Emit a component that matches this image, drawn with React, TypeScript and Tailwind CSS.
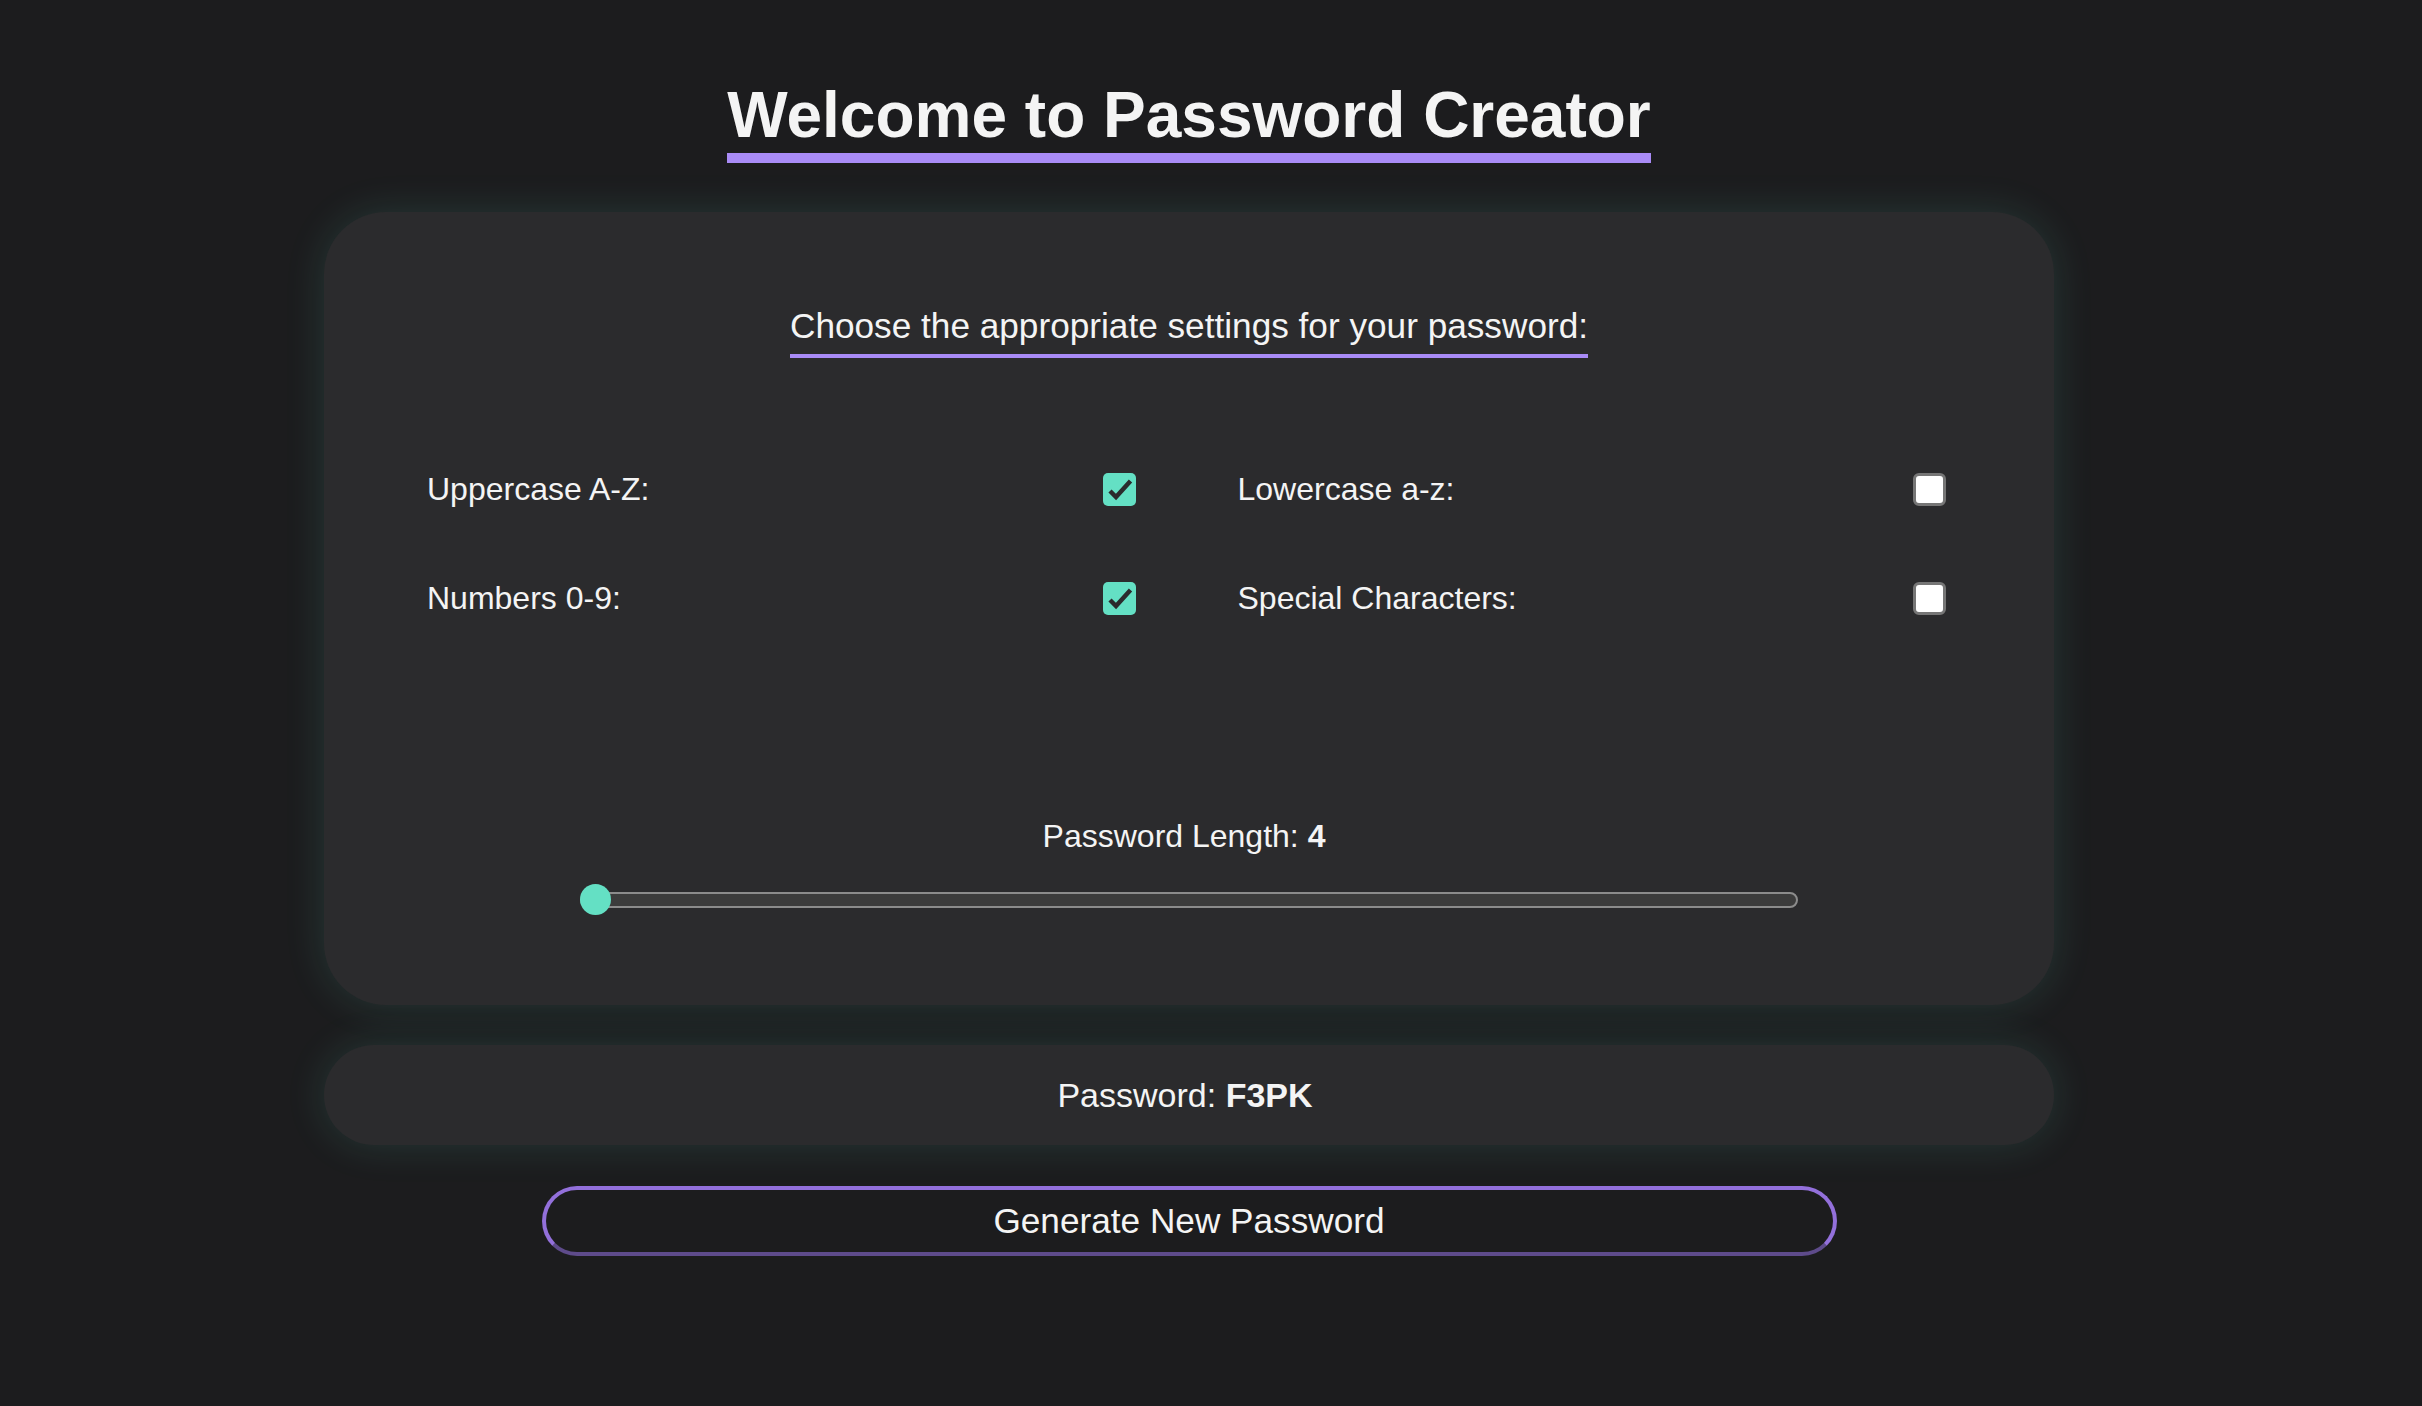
import React, { useState } from 'react'

type OptionKey = 'upper' | 'lower' | 'numbers' | 'special'

const options: { key: OptionKey; label: string }[] = [
	{ key: 'upper', label: 'Uppercase A-Z:' },
	{ key: 'lower', label: 'Lowercase a-z:' },
	{ key: 'numbers', label: 'Numbers 0-9:' },
	{ key: 'special', label: 'Special Characters:' }
]

const charsets: Record<OptionKey, string> = {
	upper: 'ABCDEFGHIJKLMNOPQRSTUVWXYZ',
	lower: 'abcdefghijklmnopqrstuvwxyz',
	numbers: '0123456789',
	special: '!@#$%^&*()_+-=[]{}<>?'
}

function Checkbox({ checked, onChange }: { checked: boolean; onChange: () => void }) {
	if (checked) {
		return (
			<button
				type="button"
				onClick={onChange}
				className="w-[33px] h-[33px] shrink-0 rounded-[5px] bg-[#64e0c4] flex items-center justify-center"
			>
				<svg width="33" height="33" viewBox="0 0 33 33" fill="none">
					<path d="M7 18 L13 24 L27.5 8" stroke="#2b2b2d" strokeWidth="4.5" />
				</svg>
			</button>
		)
	}

	return (
		<button
			type="button"
			onClick={onChange}
			className="w-[33px] h-[33px] shrink-0 rounded-[6px] border-[3px] border-[#767676] bg-white"
		/>
	)
}

export default function App() {
	const [settings, setSettings] = useState<Record<OptionKey, boolean>>({
		upper: true,
		lower: false,
		numbers: true,
		special: false
	})
	const [length] = useState<number>(4)
	const [password, setPassword] = useState<string>('F3PK')

	const toggle = (key: OptionKey) => setSettings(prev => ({ ...prev, [key]: !prev[key] }))

	const generate = () => {
		const pool = options.filter(o => settings[o.key]).map(o => charsets[o.key]).join('')
		if (!pool) return
		let next = ''
		for (let i = 0; i < length; i++) next += pool[Math.floor(Math.random() * pool.length)]
		setPassword(next)
	}

	return (
		<div className="min-h-screen bg-[#1c1c1e] text-[#f4f4f4] font-[family-name:Liberation_Sans,Arial,sans-serif] flex justify-center pr-[44px]">
			<div className="w-[1730px] flex flex-col items-center pb-[100px]">
				<h1 className="mt-[78px] text-[64px] font-bold leading-[74px] pb-[1px] border-b-[10px] border-[#a98bf6]">
					Welcome to Password Creator
				</h1>

				<div className="mt-[49px] w-full h-[793px] rounded-[62px] bg-[#2b2b2d] shadow-[0_0_40px_rgba(100,224,196,0.14)] flex flex-col items-center pt-[94px]">
					<h2 className="text-[35.2px] leading-[40px] pb-[8px] border-b-4 border-[#a98bf6]">
						Choose the appropriate settings for your password:
					</h2>

					<div className="mt-[115px] w-full grid grid-cols-2 gap-x-[102px] gap-y-[76px] pl-[103px] pr-[108px]">
						{options.map(option => (
							<label key={option.key} className="flex items-center justify-between h-[33px]">
								<span className="text-[32px] leading-[33px]">{option.label}</span>
								<Checkbox checked={settings[option.key]} onChange={() => toggle(option.key)} />
							</label>
						))}
					</div>

					<p className="mt-[203px] mr-[10px] text-[32px] leading-[37px]">
						Password Length: <b>{length}</b>
					</p>

					<div className="mt-[29px] w-[1218px] h-[31px] relative flex items-center">
						<div className="w-full h-[16px] rounded-full border-2 border-[#8c8c8c] bg-[#3c3c3c]" />
						<div className="absolute left-0 top-0 w-[31px] h-[31px] rounded-full bg-[#64e0c4]" />
					</div>
				</div>

				<div className="mt-[40px] w-full h-[100px] rounded-[50px] bg-[#2b2b2d] shadow-[0_0_40px_rgba(100,224,196,0.14)] flex items-center justify-center text-[34px]">
					<span className="mr-[8px]">
						Password: <b>{password}</b>
					</span>
				</div>

				<button
					type="button"
					onClick={generate}
					className="mt-[41px] w-[1295px] h-[70px] rounded-full border-4 border-t-[#9370db] border-l-[#9370db] border-r-[#9370db] border-b-[#5e4b8b] bg-[#1c1c1e] text-[35.2px] text-[#f4f4f4]"
				>
					Generate New Password
				</button>
			</div>
		</div>
	)
}
